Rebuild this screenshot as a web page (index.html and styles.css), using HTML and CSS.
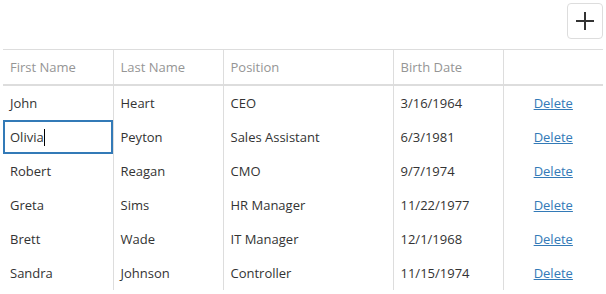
FILE: index.html
```html
<!DOCTYPE html>
<html lang="en">
<head>
  <meta charset="UTF-8" />
  <title>Employees</title>
  <link rel="stylesheet" href="styles.css">
</head>
<body>

  <div class="grid">
    <div class="toolbar">
      <button class="add-btn" title="Add a row">
        <svg width="18" height="18" viewBox="0 0 18 18">
          <path d="M9 0 V18 M0 9 H18" stroke="#333" stroke-width="2" fill="none" />
        </svg>
      </button>
    </div>

    <table class="data">
      <colgroup>
        <col style="width:110px">
        <col style="width:110px">
        <col style="width:170px">
        <col style="width:110px">
        <col style="width:100px">
      </colgroup>
      <thead>
        <tr>
          <th>First Name</th>
          <th>Last Name</th>
          <th>Position</th>
          <th>Birth Date</th>
          <th></th>
        </tr>
      </thead>
      <tbody>
        <tr>
          <td>John</td>
          <td>Heart</td>
          <td>CEO</td>
          <td>3/16/1964</td>
          <td class="action"><a href="#">Delete</a></td>
        </tr>
        <tr>
          <td class="editing">Olivia<span class="caret"></span></td>
          <td>Peyton</td>
          <td>Sales Assistant</td>
          <td>6/3/1981</td>
          <td class="action"><a href="#">Delete</a></td>
        </tr>
        <tr>
          <td>Robert</td>
          <td>Reagan</td>
          <td>CMO</td>
          <td>9/7/1974</td>
          <td class="action"><a href="#">Delete</a></td>
        </tr>
        <tr>
          <td>Greta</td>
          <td>Sims</td>
          <td>HR Manager</td>
          <td>11/22/1977</td>
          <td class="action"><a href="#">Delete</a></td>
        </tr>
        <tr>
          <td>Brett</td>
          <td>Wade</td>
          <td>IT Manager</td>
          <td>12/1/1968</td>
          <td class="action"><a href="#">Delete</a></td>
        </tr>
        <tr>
          <td>Sandra</td>
          <td>Johnson</td>
          <td>Controller</td>
          <td>11/15/1974</td>
          <td class="action"><a href="#">Delete</a></td>
        </tr>
      </tbody>
    </table>
  </div>

</body>
</html>
```

FILE: styles.css
```css
body {
  margin: 0;
  padding: 0;
  font-family: 'Open Sans', 'Noto Sans', sans-serif;
  font-size: 13px;
  color: #333;
  background: #fff;
}

.grid {
  padding: 3px 3px 0 3px;
}

.toolbar {
  display: flex;
  justify-content: flex-end;
  margin-bottom: 10px;
}

.add-btn {
  width: 36px;
  height: 36px;
  padding: 0;
  background: #fff;
  border: 1px solid #ddd;
  border-radius: 4px;
  display: flex;
  align-items: center;
  justify-content: center;
  cursor: pointer;
}

.data {
  width: 600px;
  border-collapse: collapse;
  table-layout: fixed;
  border-top: 1px solid #ddd;
}

.data th,
.data td {
  padding: 0 7px;
  text-align: left;
  white-space: nowrap;
  border-left: 1px solid #ddd;
}

.data th:first-child,
.data td:first-child {
  border-left: none;
}

.data th {
  height: 34px;
  font-weight: normal;
  color: #959595;
  border-bottom: 2px solid #ddd;
}

.data td {
  height: 34px;
}

.data td.action {
  text-align: center;
}

.data a {
  color: #337ab7;
  text-decoration: underline;
}

.data td.editing {
  box-shadow: inset 0 0 0 2px #337ab7;
}

.caret {
  display: inline-block;
  width: 1px;
  height: 17px;
  background: #000;
  vertical-align: -4px;
}
```
